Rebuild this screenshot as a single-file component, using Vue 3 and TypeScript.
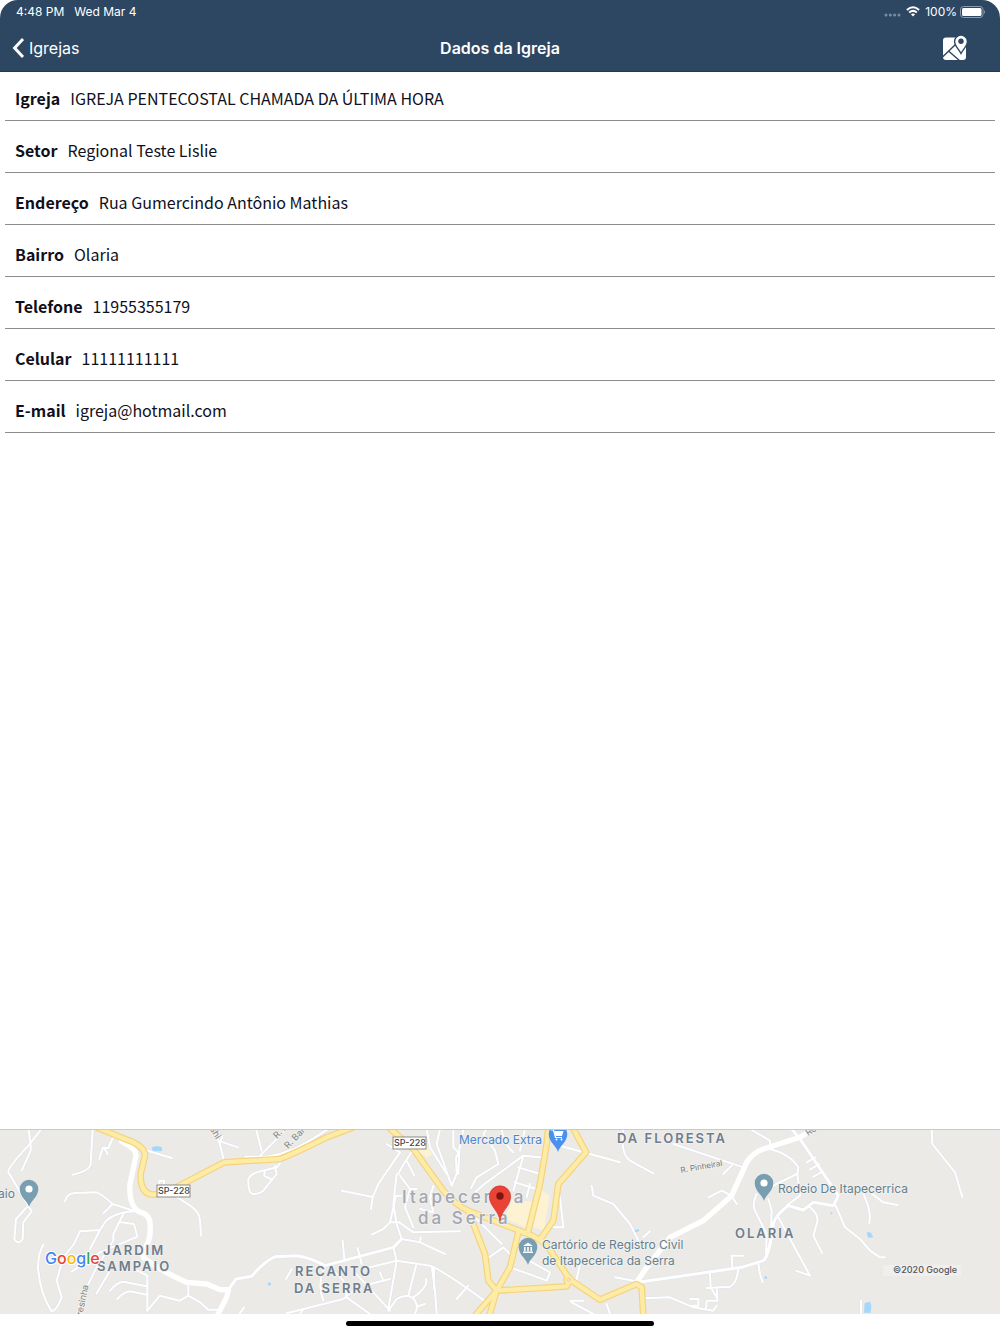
<script setup lang="ts">
interface Field { label: string; value: string }
interface Label { text: string; x: number; y: number; kind: string; angle?: number }
interface Pin { x: number; y: number; color: string; icon: 'dot' | 'cart' | 'civic' }

const fields: Field[] = [
  { label: 'Igreja', value: 'IGREJA PENTECOSTAL CHAMADA DA ÚLTIMA HORA' },
  { label: 'Setor', value: 'Regional Teste Lislie' },
  { label: 'Endereço', value: 'Rua Gumercindo Antônio Mathias' },
  { label: 'Bairro', value: 'Olaria' },
  { label: 'Telefone', value: '11955355179' },
  { label: 'Celular', value: '11111111111' },
  { label: 'E-mail', value: 'igreja@hotmail.com' },
]

const streets = [
  // west side
  'M125 15L85 65Q20 135 25 145L85 245L95 262L70 295L68 345Q55 365 43 345L48 285L85 245',
  'M85 15L92 60V80L65 140M278 15L272 120Q270 140 218 152M340 38L325 72H308L298 105M312 70L323 90M435 78L515 102',
  'M635 15L658 55L672 110M660 55L668 35M660 52L715 70',
  'M195 232Q200 208 225 207L290 205Q305 210 338 240L400 260M338 240L310 268',
  'M525 215L570 245Q598 262 600 290L603 335M478 180V170H492V180',
  'M415 262Q350 262 318 290L300 318L240 322L222 360L190 400L170 470L185 520Q170 560 155 562Q120 510 114 430Q115 385 130 362M300 318L270 375',
  'M370 270L340 330V350L290 430L255 500L230 570M362 295L402 300L412 338L300 385L215 443M330 440L290 508',
  'M412 440L442 455V560M330 500Q350 475 370 473L440 487M352 525Q370 505 390 502L440 512',
  'M442 560L480 515L540 530L565 515V485M565 515L600 535L625 557H655M718 570L732 550',
  // north, around the highway
  'M840 118L830 130L788 140Q740 150 745 175Q745 205 758 210Q780 210 790 200L830 150L825 125M795 140L792 155L812 165',
  'M735 98H790Q860 95 945 40L985 15M775 100L850 25M785 80L768 15',
  // centre-west
  'M1205 345L1260 355L1335 390M1260 355L1262 340M1205 345L1190 300L1180 240L1190 150M1190 300L1180 240M1170 295L1150 315L1115 332M1170 295H1198L1240 325L1380 322',
  'M1170 295L1188 215H1205M1195 150Q1205 125 1245 70M1200 85L1135 180L1118 220L1113 255M1025 200L1115 218M1200 155L1230 195L1215 250L1240 310M1220 110L1243 155M1160 60L1200 85M1230 195H1250',
  'M1300 185L1290 220L1300 265L1260 255M1290 220L1330 210',
  'M1180 370L1190 410L1165 555M1110 430L1190 410L1290 425Q1330 440 1460 535M1028 350L1033 405M1073 372L1085 420',
  'M1140 445L1150 470M1170 465L1110 480M975 425Q950 480 970 530M1000 440L1030 470L1040 520L1110 570M1060 440L1170 560M860 568L1030 525L1060 500',
  'M1165 560L1190 525Q1215 510 1235 520Q1260 540 1245 570M1225 515L1248 425M1240 520Q1285 490 1278 465M1250 548L1275 540M1295 425L1305 500L1310 570M1302 430V495M858 465L875 435M900 570L910 555',
  // centre
  'M1320 15L1310 60L1355 185M1360 15V70Q1382 85 1368 100L1370 150L1355 185M1390 15L1378 75L1375 150M1413 192L1430 160L1495 120L1485 80L1450 30L1460 15M1425 205L1460 175L1570 95L1620 100M1505 15Q1510 60 1540 85M1280 15L1290 70L1340 150',
  'M1570 95L1540 200M1555 130L1620 150M1545 175L1610 195M1590 180L1580 220M1575 15L1560 80',
  'M1410 265L1505 360M1460 405L1510 370L1540 400M1530 430L1600 455L1640 470L1650 445L1570 400M1370 525L1405 485M1605 340L1660 385M1740 420L1730 465',
  'M1775 185L1780 215L1840 240L1890 300L1915 350M1680 65L1860 115M1715 535L1780 570M1710 530H1750M1820 540L1830 570M1680 220L1690 310H1660',
  'M1845 460L1900 470M1930 340L1950 322',
  // east side
  'M1870 15Q1860 90 1890 110L1960 148M2020 60L2230 130M2170 150L2195 125M2125 220L2165 200L2195 215L2210 240M2250 15L2310 50V70',
  'M2310 75Q2370 90 2395 130L2392 150L2400 215L2360 245M2390 150L2320 185M2270 210Q2255 240 2265 260L2300 330L2298 400M2305 225L2315 260L2312 340L2300 400',
  'M2230 395H2195L2197 430M2130 450L2132 490L2150 520M2215 435Q2210 480 2190 488L2120 492M2150 490L2152 530L2120 530L2118 555M2070 525H2095V545H2075M1930 523L2010 520L2080 550L2140 560L2150 545',
  'M2275 420L2280 450L2288 475M2335 280L2430 455L2388 440M2505 240L2535 310L2580 345L2610 380L2640 400H2655M2430 250Q2460 275 2450 300L2440 335L2467 388',
  'M2590 210Q2615 260 2608 298M2610 205L2650 235L2693 243M2795 15L2797 60L2865 145L2887 220M2420 115L2445 100M2430 137L2458 120M2440 158L2468 143M2583 530V570',
]
const avenues = [
  'M685 497L708 465L755 457Q790 415 825 398L890 395Q930 400 975 425L1180 370L1205 345',
  'M1915 475L2225 430L2290 410Q2310 390 2320 300Q2325 275 2365 245L2410 258L2440 235L2500 245L2515 215L2400 45L2375 15',
]
const mainRoads = [
  'M365 52Q410 75 408 95L390 180Q385 240 415 262Q450 270 450 300Q455 350 430 380V400Q480 440 560 475L620 480L660 497H685L680 520L652 575',
  'M1910 475L1940 430L2010 340L2110 290L2195 215L2240 115Q2260 85 2290 75L2400 40L2450 10',
]
const highways = [
  'M290 10L375 45Q435 65 435 95L422 150Q420 210 460 212L500 205L548 180L672 115L840 105Q880 90 980 40L1060 10',
  'M1160 5L1240 75L1330 200Q1370 245 1400 258L1570 325Q1620 340 1645 370L1710 467L1800 527L1910 480L1925 490L1930 575',
  'M1405 262L1455 390L1465 470L1490 500L1700 487L1710 467',
  'M1645 10L1640 60L1620 180L1585 320M1555 325L1530 430L1490 500L1468 575M1490 500L1425 575',
  'M1718 10L1758 85L1675 180L1660 290L1625 340',
]

const labels: Label[] = [
  { text: 'Mercado Extra', x: 459, y: 15, kind: 'shop' },
  { text: 'DA FLORESTA', x: 617, y: 14, kind: 'area' },
  { text: 'Itapecerica', x: 402, y: 74, kind: 'city' },
  { text: 'da Serra', x: 418, y: 95, kind: 'city' },
  { text: 'JARDIM', x: 103, y: 126, kind: 'area' },
  { text: 'SAMPAIO', x: 97, y: 142, kind: 'area' },
  { text: 'RECANTO', x: 295, y: 147, kind: 'area' },
  { text: 'DA SERRA', x: 294, y: 164, kind: 'area' },
  { text: 'OLARIA', x: 735, y: 109, kind: 'area' },
  { text: 'aio', x: -2, y: 69, kind: 'place' },
  { text: 'Cartório de Registro Civil', x: 542, y: 120, kind: 'place' },
  { text: 'de Itapecerica da Serra', x: 542, y: 136, kind: 'place' },
  { text: 'Rodeio De Itapecerrica', x: 778, y: 64, kind: 'place' },
  { text: 'R. Pinheiral', x: 681, y: 44, kind: 'street', angle: -10 },
  { text: 'R. A', x: 277, y: 10, kind: 'lane', angle: -46 },
  { text: 'R. Bar', x: 288, y: 20, kind: 'lane', angle: -46 },
  { text: 'ashi', x: 207, y: -4, kind: 'lane', angle: 58 },
  { text: 'Teresinha', x: 80, y: 197, kind: 'lane', angle: -78 },
  { text: 'Ro', x: 808, y: 7, kind: 'lane', angle: -32 },
]
const pins: Pin[] = [
  { x: 29, y: 77, color: '#7a9eb1', icon: 'dot' },
  { x: 764, y: 71, color: '#7a9eb1', icon: 'dot' },
  { x: 528, y: 135, color: '#7a9eb1', icon: 'civic' },
  { x: 558, y: 22, color: '#4a90ee', icon: 'cart' },
]
const shields = [{ x: 393, y: 8 }, { x: 157, y: 56 }]
</script>

<template>
  <div class="page">
    <header class="top">
      <div class="status">
        <span class="clock">4:48 PM</span>
        <span>Wed Mar 4</span>
        <span class="spacer"></span>
        <svg class="signal" width="17" height="4" viewBox="0 0 17 4" aria-hidden="true">
          <g fill="#788da2"><circle cx="2" cy="2" r="1.5" /><circle cx="6.3" cy="2" r="1.5" /><circle cx="10.6" cy="2" r="1.5" /><circle cx="15" cy="2" r="1.5" /></g>
        </svg>
        <svg class="wifi" width="14" height="11" viewBox="0 0 14 11" aria-hidden="true">
          <g fill="none" stroke="#fff" stroke-width="2"><path d="M.9 4Q7-1.6 13.1 4" /><path d="M3.2 6.6Q7 3.2 10.8 6.6" /></g>
          <path d="M4.9 8.3Q7 6.7 9.1 8.3L7 10.6Z" fill="#fff" />
        </svg>
        <span>100%</span>
        <svg class="battery" width="26" height="12" viewBox="0 0 26 12" aria-hidden="true">
          <rect x=".5" y=".5" width="22.5" height="11" rx="3" fill="none" stroke="#8b9cae" />
          <rect x="2" y="2" width="19.5" height="8" rx="1.5" fill="#fff" />
          <path d="M24 4Q26 6 24 8Z" fill="#8b9cae" />
        </svg>
      </div>
      <nav class="bar">
        <a class="back" href="#igrejas">
          <svg width="13" height="22" viewBox="0 0 13 22" aria-hidden="true"><path d="M11 2L2.6 11L11 20" fill="none" stroke="#fff" stroke-width="3" /></svg>
          Igrejas
        </a>
        <h1>Dados da Igreja</h1>
        <button class="map-button" type="button" aria-label="Mapa">
          <svg width="26" height="26" viewBox="0 0 26 26" aria-hidden="true">
            <rect x="1" y="2.500" width="23" height="22.500" rx="3" fill="#fff" />
            <path d="M0 22.500L13.500 9.500M6.500 16L18 26" fill="none" stroke="#2d4762" stroke-width="1.400" />
            <path d="M19 18.500C17 14.500 12.600 11 12.600 6.500A6.400 6.400 0 0 1 25.400 6.500C25.400 11 21 14.500 19 18.500Z" fill="#fff" stroke="#2d4762" stroke-width="1.400" />
            <circle cx="19" cy="6.300" r="2.700" fill="#2d4762" />
          </svg>
        </button>
      </nav>
    </header>

    <main>
      <dl class="fields">
        <div v-for="f in fields" :key="f.label" class="field">
          <dt>{{ f.label }}</dt>
          <dd>{{ f.value }}</dd>
        </div>
      </dl>
    </main>

    <section class="map" aria-label="Mapa da igreja">
      <svg class="layer" viewBox="0 15 3000 555" preserveAspectRatio="xMidYMid slice" aria-hidden="true">
        <g fill="#fdf3d3">
          <path d="M1535 228L1620 235L1585 312L1515 285Z" /><path d="M1620 195L1648 215L1632 320L1600 308Z" /><path d="M1260 40L1300 90L1280 100L1220 60Z" />
        </g>
        <g fill="#a5d7fb">
          <path d="M455 70L470 66L486 70L485 82L458 82Z" /><path d="M2600 325L2612 325L2620 340L2604 341Z" />
          <path d="M2594 537L2610 533L2614 545L2612 566H2592Z" /><path d="M1904 319L1917 315V322L1905 325Z" />
          <circle cx="808" cy="480" r="5" /><circle cx="2297" cy="461" r="4" /><circle cx="2494" cy="268" r="3" />
        </g>
        <g class="lines">
          <path v-for="d in streets" :key="d" :d="d" stroke="#dfe2e9" stroke-width="9" />
          <path v-for="d in avenues" :key="d" :d="d" stroke="#dfe2e9" stroke-width="12" />
          <path v-for="d in streets" :key="d" :d="d" stroke="#fff" stroke-width="6" />
          <path v-for="d in avenues" :key="d" :d="d" stroke="#fff" stroke-width="9" />
          <path v-for="d in mainRoads" :key="d" :d="d" stroke="#fff" stroke-width="16" />
          <path v-for="d in highways" :key="d" :d="d" stroke="#f6d27c" stroke-width="20" />
          <circle cx="1706" cy="467" r="14" fill="#fdeca6" stroke="#f6d27c" stroke-width="4" />
          <path v-for="d in highways" :key="d" :d="d" stroke="#fdeca6" stroke-width="13" />
          <circle cx="1706" cy="467" r="5" fill="#ebeae7" stroke="#f6d27c" stroke-width="3" />
        </g>
      </svg>

      <svg class="layer" viewBox="0 0 1000 185" preserveAspectRatio="xMidYMid slice">
        <g v-for="s in shields" :key="s.x">
          <rect :x="s.x" :y="s.y" width="33" height="12" fill="#fff" stroke="#8b8b88" />
          <text class="shield" :x="s.x + 17" :y="s.y + 9" text-anchor="middle">SP-228</text>
        </g>
        <text
          v-for="l in labels"
          :key="l.text"
          :class="l.kind"
          :x="l.x"
          :y="l.y"
          :transform="l.angle ? `rotate(${l.angle} ${l.x} ${l.y})` : undefined"
        >{{ l.text }}</text>

        <g v-for="p in pins" :key="p.x" :transform="`translate(${p.x} ${p.y})`">
          <path d="M0 1C-1.5-5-9.3-9-9.3-17A9.3 9.3 0 0 1 9.3-17C9.3-9 1.5-5 0 1Z" :fill="p.color" />
          <circle v-if="p.icon === 'dot'" cy="-17" r="3.6" fill="#fff" />
          <g v-else-if="p.icon === 'cart'">
            <path d="M-7-21H-4.500L-2.500-13.500H4" fill="none" stroke="#fff" stroke-width="1.200" />
            <path d="M-4-20H5.500L4-15H-2.500Z" fill="#fff" />
            <circle cx="-1.500" cy="-11.500" r="1" fill="#fff" /><circle cx="3.500" cy="-11.500" r="1" fill="#fff" />
          </g>
          <path v-else d="M-5-18L0-21.5L5-18ZM-4-17H-2.4V-13H-4ZM-.8-17H.8V-13H-.8ZM2.4-17H4V-13H2.4ZM-5-12.4H5V-11H-5Z" fill="#fff" />
        </g>
        <path d="M500 92C499 82 489.300 77 489.300 67.500A10.700 10.700 0 0 1 510.700 67.500C510.700 77 501 82 500 92Z" fill="#ea4335" stroke="#c5362a" stroke-width=".6" />
        <circle cx="500" cy="67" r="3.700" fill="#7e1410" />

        <text class="logo" x="45" y="135"><tspan fill="#4285f4">G</tspan><tspan fill="#ea4335">o</tspan><tspan fill="#fbbc05">o</tspan><tspan fill="#4285f4">g</tspan><tspan fill="#34a853">l</tspan><tspan fill="#ea4335">e</tspan></text>
        <rect x="883" y="136" width="78" height="11" fill="#f0efed" />
        <text class="legal" x="893" y="144">©2020 Google</text>
      </svg>
    </section>

    <footer class="home"><span class="indicator"></span></footer>
  </div>
</template>

<style>
body {
  margin: 0;
  background: #fff;
}
</style>

<style scoped>
.page {
  display: flex;
  flex-direction: column;
  min-height: 100vh;
  color: #10101c;
  font-family: Inter, "Liberation Sans", sans-serif;
}

.top {
  box-sizing: border-box;
  height: 72px;
  border-bottom: 1px solid #233a54;
  border-radius: 18px 18px 0 0;
  background: #2d4762;
  color: #fff;
}

.status {
  display: flex;
  align-items: center;
  height: 23px;
  padding: 0 14px 0 16px;
  font-size: 12px;
}

.clock {
  margin-right: 10px;
}

.spacer {
  flex: 1;
}

.signal {
  margin: 6px 5px 0 0;
}

.wifi {
  margin-right: 5px;
}

.battery {
  margin-left: 3px;
}

.bar {
  display: grid;
  grid-template-columns: 1fr auto 1fr;
  align-items: center;
  height: 49px;
  padding: 0 32px 0 12px;
}

.back {
  display: flex;
  align-items: center;
  gap: 4px;
  color: #fff;
  font-size: 16px;
  text-decoration: none;
}

h1 {
  margin: 0 0 0 20px;
  font-size: 16px;
  font-weight: 600;
}

.map-button {
  display: flex;
  justify-self: end;
  padding: 0;
  border: 0;
  background: none;
}

main {
  flex: 1;
  padding-top: 1px;
}

.fields {
  display: flex;
  flex-direction: column;
  gap: 4px;
  margin: 0 5px;
  font-family: "Noto Sans CJK JP", "Noto Sans", sans-serif;
  font-size: 16px;
  line-height: 26px;
}

.field {
  display: flex;
  gap: 10px;
  padding: 12px 10px 9px;
  border-bottom: 1px solid #8c8c8c;
}

dt {
  font-weight: 700;
}

dd {
  margin: 0;
}

.map {
  position: relative;
  height: 185px;
  overflow: hidden;
  background: #ebeae7;
}

.map::after {
  position: absolute;
  inset: 0 0 auto;
  height: 1px;
  background: #b9cfdb;
  content: "";
}

.layer {
  position: absolute;
  inset: 0;
  width: 100%;
  height: 100%;
}

.lines {
  fill: none;
  stroke-linecap: round;
  stroke-linejoin: round;
}

text {
  paint-order: stroke;
  stroke: #f1f0ee;
  stroke-width: 2px;
  stroke-linejoin: round;
}

.shield {
  fill: #444;
  stroke: none;
  font-size: 9px;
  font-weight: 500;
}

.area {
  fill: #6f7d8d;
  font-size: 13px;
  font-weight: 600;
  letter-spacing: 2px;
}

.city {
  fill: #a2a7b1;
  font-size: 17px;
  font-weight: 500;
  letter-spacing: 3px;
}

.place {
  fill: #64818f;
  font-size: 12px;
}

.shop {
  fill: #4b86cf;
  font-size: 12px;
}

.street {
  fill: #77756f;
  font-size: 8px;
}

.lane {
  fill: #85847f;
  font-size: 9px;
}

.logo {
  stroke: #fff;
  font-size: 16px;
  font-weight: 500;
}

.legal {
  fill: #555;
  stroke: none;
  font-size: 9px;
  font-weight: 500;
}

.home {
  display: flex;
  justify-content: center;
  height: 20px;
}

.indicator {
  width: 308px;
  height: 5px;
  margin-top: 7px;
  border-radius: 3px;
  background: #000;
}
</style>
